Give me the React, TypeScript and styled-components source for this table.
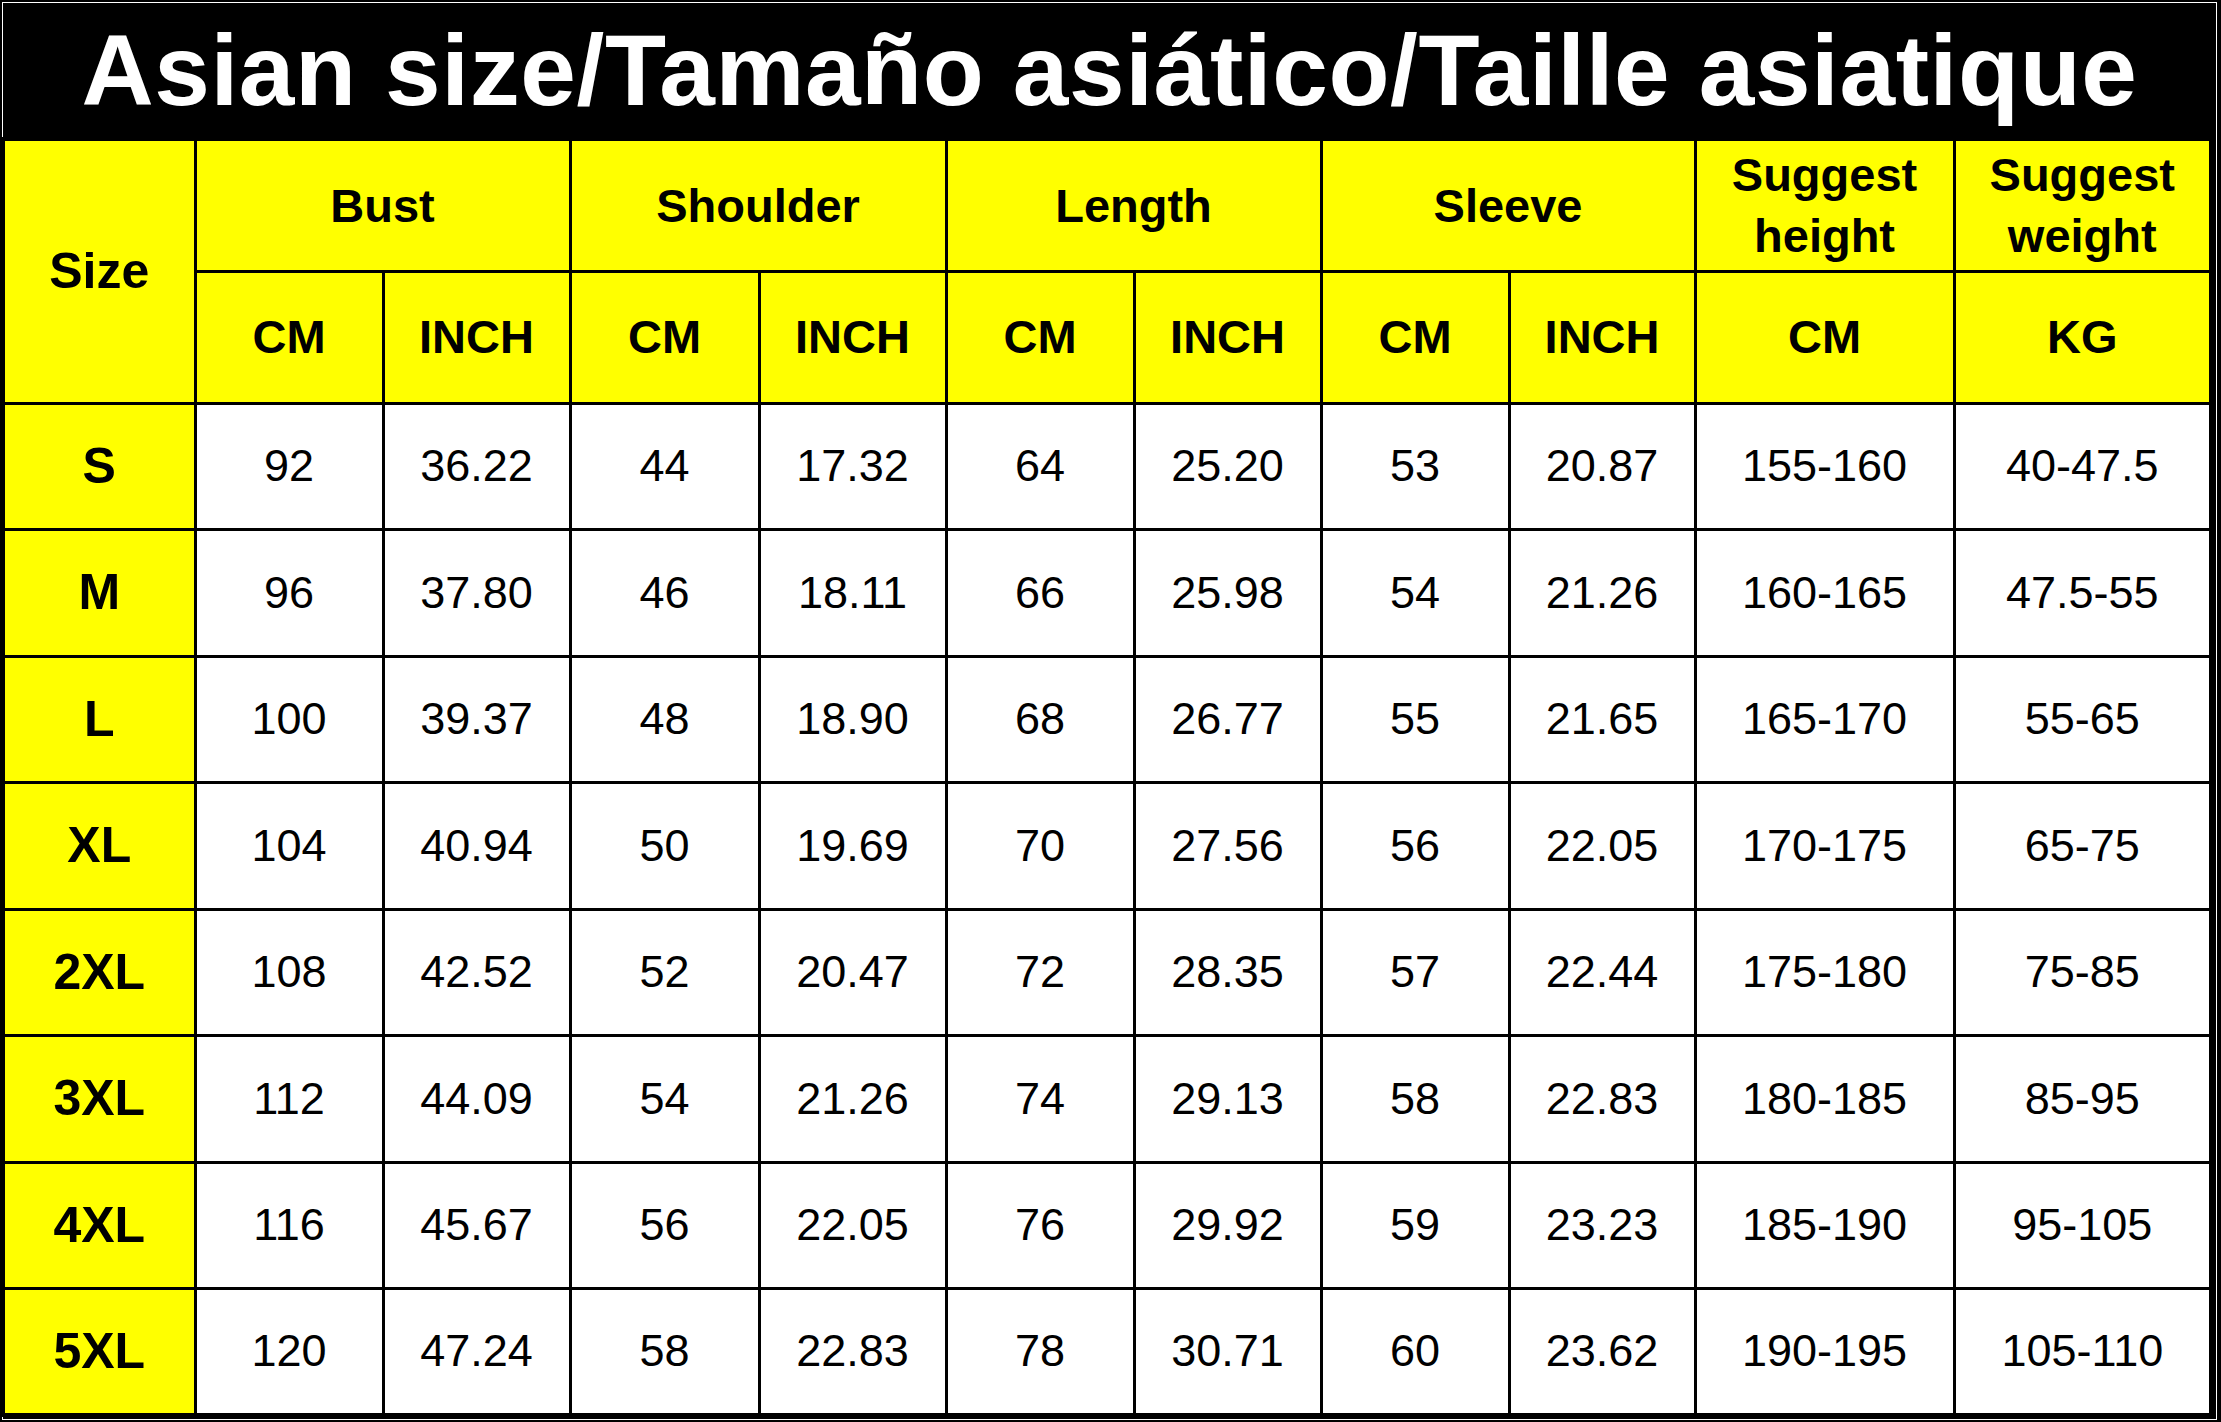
import styled, { createGlobalStyle } from "styled-components";

const GlobalStyle = createGlobalStyle`
  html, body {
    margin: 0;
    padding: 0;
    background: #000;
  }
  body {
    font-family: "Liberation Sans", Arial, sans-serif;
  }
`;

const Frame = styled.div`
  width: 2221px;
  height: 1422px;
  box-sizing: border-box;
  background: #000;
  padding: 2px 4px 2px 2px;
  overflow: hidden;
`;

const Inner = styled.div`
  height: 100%;
  box-sizing: border-box;
  border: 1px solid #fff;
  background: #000;
  display: flex;
  flex-direction: column;
`;

const Title = styled.h1`
  margin: 0;
  height: 134px;
  flex-shrink: 0;
  display: flex;
  align-items: center;
  justify-content: center;
  color: #fff;
  font-family: "Liberation Sans", Arial, sans-serif;
  font-weight: 700;
  font-size: 100px;
  letter-spacing: 0.6px;
  white-space: nowrap;
`;

const Table = styled.table`
  width: 2210px;
  margin-left: -2px;
  flex-shrink: 0;
  border-collapse: collapse;
  table-layout: fixed;
  border: 4px solid #000;
`;

const Cell = styled.td<{ $head?: boolean; $bold?: boolean; $big?: boolean }>`
  border: 3px solid #000;
  background: ${(p) => (p.$head ? "#ffff00" : "#fff")};
  color: #000;
  text-align: center;
  vertical-align: middle;
  padding: 0;
  font-size: ${(p) => (p.$big ? "50px" : p.$bold ? "47px" : "45px")};
  font-weight: ${(p) => (p.$bold ? 700 : 400)};
  line-height: 1.3;
`;

const HeadRow = styled.tr`
  height: 132px;
`;

const DataRow = styled.tr`
  height: 126.5px;
`;

const widths = [192, 188, 187, 189, 187, 188, 187, 188, 186, 259, 257];

const groups = ["Bust", "Shoulder", "Length", "Sleeve"];

const rows: string[][] = [
  ["S", "92", "36.22", "44", "17.32", "64", "25.20", "53", "20.87", "155-160", "40-47.5"],
  ["M", "96", "37.80", "46", "18.11", "66", "25.98", "54", "21.26", "160-165", "47.5-55"],
  ["L", "100", "39.37", "48", "18.90", "68", "26.77", "55", "21.65", "165-170", "55-65"],
  ["XL", "104", "40.94", "50", "19.69", "70", "27.56", "56", "22.05", "170-175", "65-75"],
  ["2XL", "108", "42.52", "52", "20.47", "72", "28.35", "57", "22.44", "175-180", "75-85"],
  ["3XL", "112", "44.09", "54", "21.26", "74", "29.13", "58", "22.83", "180-185", "85-95"],
  ["4XL", "116", "45.67", "56", "22.05", "76", "29.92", "59", "23.23", "185-190", "95-105"],
  ["5XL", "120", "47.24", "58", "22.83", "78", "30.71", "60", "23.62", "190-195", "105-110"],
];

export default function App() {
  return (
    <>
      <GlobalStyle />
      <Frame>
        <Inner>
          <Title>Asian size/Tamaño asiático/Taille asiatique</Title>
          <Table>
            <colgroup>
              {widths.map((w, i) => (
                <col key={i} style={{ width: w }} />
              ))}
            </colgroup>
            <thead>
              <HeadRow>
                <Cell as="th" $head $bold $big rowSpan={2}>
                  Size
                </Cell>
                {groups.map((g) => (
                  <Cell as="th" key={g} $head $bold colSpan={2}>
                    {g}
                  </Cell>
                ))}
                <Cell as="th" $head $bold>
                  Suggest
                  <br />
                  height
                </Cell>
                <Cell as="th" $head $bold>
                  Suggest
                  <br />
                  weight
                </Cell>
              </HeadRow>
              <HeadRow>
                {groups.map((g) => [
                  <Cell as="th" key={g + "cm"} $head $bold>
                    CM
                  </Cell>,
                  <Cell as="th" key={g + "in"} $head $bold>
                    INCH
                  </Cell>,
                ])}
                <Cell as="th" $head $bold>
                  CM
                </Cell>
                <Cell as="th" $head $bold>
                  KG
                </Cell>
              </HeadRow>
            </thead>
            <tbody>
              {rows.map((r) => (
                <DataRow key={r[0]}>
                  {r.map((v, i) =>
                    i === 0 ? (
                      <Cell key={i} $head $bold $big>
                        {v}
                      </Cell>
                    ) : (
                      <Cell key={i}>{v}</Cell>
                    )
                  )}
                </DataRow>
              ))}
            </tbody>
          </Table>
        </Inner>
      </Frame>
    </>
  );
}
